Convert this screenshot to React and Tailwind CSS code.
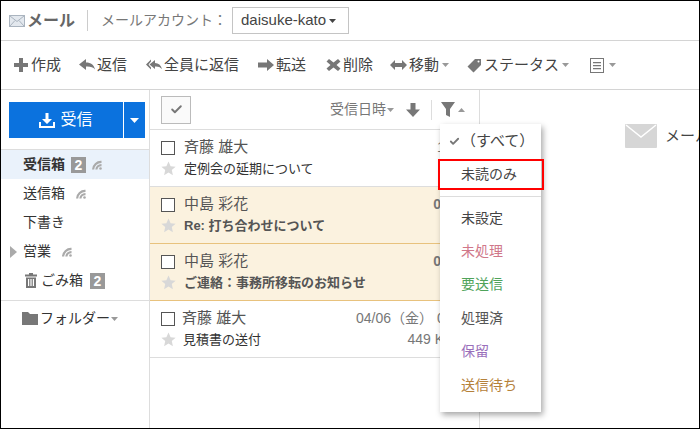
import { Check } from 'lucide-react'

const font = { fontFamily: '"Liberation Sans", "Noto Sans CJK JP", sans-serif' }

function Caret({ up = false, className = '' }) {
  return (
    <svg width="7" height="4" viewBox="0 0 7 4" className={className} aria-hidden="true">
      <path d={up ? 'M0 4L3.5 0L7 4Z' : 'M0 0H7L3.5 4Z'} fill="currentColor" />
    </svg>
  )
}

function Icon({ w = 16, h = 14, view, children, className = 'text-[#777]' }) {
  return (
    <svg width={w} height={h} viewBox={view || `0 0 ${w} ${h}`} className={`shrink-0 ${className}`} aria-hidden="true">
      <g fill="currentColor">{children}</g>
    </svg>
  )
}

const PlusIcon = () => <Icon w={14} h={14} className="mr-[1px] text-[#777]"><path d="M5 0h4v5h5v4H9v5H5V9H0V5h5z" /></Icon>
const ReplyIcon = () => <Icon><path d="M7 1v3.500c5 0 8 2.500 9 7-2-2.500-4.500-3.200-9-3V12L0 6.500z" /></Icon>
const ReplyAllIcon = () => (
  <Icon>
    <path d="M9 2v3c3.500 0 6 2 7 6-2-2-4-2.700-7-2.500V11L3.500 6.500z" />
    <path d="M5 1.500L0 6.500 5 11.500V9.500L2.500 6.500 5 3.500z" />
  </Icon>
)
const ForwardIcon = () => <Icon><path d="M9 1l7 6-7 6V9.500H0v-5h9z" /></Icon>
const CrossIcon = () => <Icon w={15} h={14}><path d="M3 1l4.500 3.500L12 1l2.500 2.500L10.500 7l4 3.500L12 13 7.500 9.500 3 13 .5 10.500l4-3.500-4-3.500z" /></Icon>
const MoveIcon = () => <Icon w={17} h={12}><path d="M5 1v3h7V1l5 5-5 5V8H5v3L0 6z" /></Icon>
const TagIcon = () => (
  <Icon w={15} h={15}>
    <path fillRule="evenodd" d="M8 1h6v6l-7.500 7.500L0.500 8.500zM11.500 2.500a1 1 0 1 0 0 2 1 1 0 0 0 0-2z" />
  </Icon>
)
const ListIcon = () => (
  <svg width="14" height="15" viewBox="0 0 14 15" className="shrink-0 text-[#777]" aria-hidden="true">
    <rect x="0.500" y="0.500" width="13" height="14" fill="none" stroke="currentColor" />
    <path d="M3 4h8v1.300H3zM3 7h8v1.300H3zM3 10h8v1.300H3z" fill="currentColor" />
  </svg>
)

const RssIcon = () => (
  <svg width="10" height="10" viewBox="0 0 10 10" className="shrink-0 text-[#aaa]" aria-hidden="true">
    <path d="M0 9.500A9 9 0 0 1 9.500 0.800V3A7 7 0 0 0 2.200 9.500z" fill="currentColor" />
    <path d="M3.300 9.500A6 6 0 0 1 9.500 4v2.200A3.800 3.800 0 0 0 5.500 9.500z" fill="currentColor" />
    <circle cx="8.500" cy="8.500" r="1.300" fill="currentColor" />
  </svg>
)

const StarIcon = () => (
  <svg width="15" height="15" viewBox="0 0 15 15" className="shrink-0 text-[#d8d8d8]" aria-hidden="true">
    <path d="M7.500 0.500l2.100 4.700 5 .5-3.800 3.400 1.100 5.100-4.400-2.700-4.400 2.700 1.100-5.100L.4 5.700l5-.5z" fill="currentColor" />
  </svg>
)

function CountBadge({ n }) {
  return (
    <span className="flex h-[16px] w-[15px] items-center justify-center bg-[#999] text-[14px] font-bold leading-none text-white">{n}</span>
  )
}

const tools = [
  { label: '作成', icon: <PlusIcon />, ml: 'ml-[13px]' },
  { label: '返信', icon: <ReplyIcon />, ml: 'ml-[18px]' },
  { label: '全員に返信', icon: <ReplyAllIcon />, ml: 'ml-[19px]' },
  { label: '転送', icon: <ForwardIcon />, ml: 'ml-[19px]' },
  { label: '削除', icon: <CrossIcon />, ml: 'ml-[20px]' },
  { label: '移動', icon: <MoveIcon />, ml: 'ml-[17px]', caret: true },
  { label: 'ステータス', icon: <TagIcon />, ml: 'ml-[18px]', caret: true },
]

const folders = [
  { label: '受信箱', count: 2, rss: true, active: true },
  { label: '送信箱', rss: true, gap: true },
  { label: '下書き' },
  { label: '営業', rss: true, arrow: true, gap: true },
]

const mails = [
  { from: '斉藤 雄大', subject: '定例会の延期について', date: '10:30', size: '1 MB' },
  { from: '中島 彩花', subject: 'Re: 打ち合わせについて', date: '09:12', size: '2 KB', unread: true },
  { from: '中島 彩花', subject: 'ご連絡：事務所移転のお知らせ', date: '08:47', size: '3 KB', unread: true },
  { from: '斉藤 雄大', subject: '見積書の送付', date: '04/06（金） 09:30', size: '449 KByte', tight: true },
]

const statuses = [
  { label: '未設定', color: 'text-[#444]' },
  { label: '未処理', color: 'text-[#d0778a]' },
  { label: '要送信', color: 'text-[#4fa35a]' },
  { label: '処理済', color: 'text-[#555]' },
  { label: '保留', color: 'text-[#9a6fbb]' },
  { label: '送信待ち', color: 'text-[#b5813a]' },
]

function MailRow({ mail }) {
  const rowColor = mail.unread ? 'bg-[#fbf2df] border-[#e8c27d]' : 'bg-white border-[#ddd]'
  return (
    <div className={`h-[57px] border-b pl-[11px] pr-[7px] pt-[7px] ${rowColor}`}>
      <div className="flex h-[21px] items-center whitespace-nowrap">
        <span className="h-[14px] w-[14px] shrink-0 border border-[#555] bg-white" />
        <span className={`text-[15px] text-[#555] ${mail.tight ? 'ml-[7px]' : 'ml-[9px]'}`}>{mail.from}</span>
        <span className={`ml-auto text-[14px] text-[#777] ${mail.unread ? 'mr-[3px] font-bold' : ''}`}>{mail.date}</span>
      </div>
      <div className="flex h-[21px] items-center whitespace-nowrap">
        <StarIcon />
        <span className={`text-[13px] ${mail.tight ? 'ml-[7px]' : 'ml-[8px]'} ${mail.unread ? 'font-bold text-[#555]' : 'text-[#333]'}`}>{mail.subject}</span>
        <span className="ml-auto text-[14px] text-[#777]">{mail.size}</span>
      </div>
    </div>
  )
}

export default function App() {
  return (
    <div className="relative flex h-[429px] w-[700px] flex-col overflow-hidden border border-black bg-white text-[#333]" style={font}>
      <header className="flex h-[40px] shrink-0 items-center border-b border-[#d4d4d4]">
        <svg width="16" height="12" viewBox="0 0 16 12" className="ml-[8px] shrink-0" aria-hidden="true">
          <rect x="0.500" y="0.500" width="15" height="11" fill="#e3e8ee" stroke="#aab4bf" />
          <path d="M1 1l7 5.500L15 1M1 11l5-5.500M15 11l-5-5.500" fill="none" stroke="#aab4bf" />
        </svg>
        <span className="ml-[2px] text-[16px] font-bold text-[#666]">メール</span>
        <span className="ml-[12px] h-[21px] w-px bg-[#ccc]" />
        <span className="ml-[13px] whitespace-nowrap text-[14px] text-[#777]">メールアカウント：</span>
        <div className="ml-[5px] flex h-[27px] w-[117px] items-center border border-[#c4c4c4] pl-[8px]">
          <span className="text-[15px] text-[#444]">daisuke-kato</span>
          <Caret className="ml-[3px] text-[#444]" />
        </div>
      </header>

      <div className="flex h-[49px] shrink-0 items-center border-b border-[#d4d4d4] text-[15px] text-[#444]">
        {tools.map((tool) => (
          <div key={tool.label} className={`flex items-center gap-[2px] whitespace-nowrap ${tool.ml}`}>
            {tool.icon}
            <span>{tool.label}</span>
            {tool.caret && <Caret className="ml-[1px] text-[#999]" />}
          </div>
        ))}
        <div className="ml-[21px] flex items-center gap-[5px]">
          <ListIcon />
          <Caret className="text-[#999]" />
        </div>
      </div>

      <div className="flex min-h-0 flex-1">
        <aside className="w-[149px] shrink-0 border-r border-[#ddd]">
          <div className="ml-[8px] mt-[12px] flex h-[36px] w-[136px] bg-[#0b72de] text-white">
            <div className="flex w-[115px] items-center justify-center gap-[5px] border-r border-white">
              <svg width="16" height="15" viewBox="0 0 16 15" aria-hidden="true">
                <path d="M6.500 0h3v6H13L8 11 3 6h3.500zM0 9h2v4h12V9h2v6H0z" fill="currentColor" />
              </svg>
              <span className="text-[16px]">受信</span>
            </div>
            <div className="flex flex-1 items-center justify-center">
              <svg width="9" height="5" viewBox="0 0 9 5" aria-hidden="true">
                <path d="M0 0h9L4.500 5z" fill="currentColor" />
              </svg>
            </div>
          </div>

          <nav className="mt-[11px] border-t border-[#ddd] text-[14px]">
            {folders.map((f) => (
              <div key={f.label} className={`relative flex h-[29px] items-center pl-[22px] ${f.active ? 'bg-[#eaf2fb] font-bold' : ''}`}>
                {f.arrow && (
                  <svg width="7" height="12" viewBox="0 0 7 12" className="absolute left-[9px] text-[#aaa]" aria-hidden="true">
                    <path d="M0 0l7 6-7 6z" fill="currentColor" />
                  </svg>
                )}
                <span>{f.label}</span>
                {f.count && <span className="ml-[6px]"><CountBadge n={f.count} /></span>}
                {f.rss && <span className={f.gap ? 'ml-[11px]' : 'ml-[6px]'}><RssIcon /></span>}
              </div>
            ))}
            <div className="flex h-[29px] items-center pl-[24px]">
              <svg width="12" height="15" viewBox="0 0 12 15" className="shrink-0 text-[#777]" aria-hidden="true">
                <path fillRule="evenodd" d="M4 0h4v1.500h4V3.500H0V1.500h4zM1 4.500h10V15H1zM3 6v7h1.200V6zM5.400 6v7h1.200V6zM7.800 6v7H9V6z" fill="currentColor" />
              </svg>
              <span className="ml-[4px]">ごみ箱</span>
              <span className="ml-[7px]"><CountBadge n={2} /></span>
            </div>
          </nav>

          <div className="mt-[5px] flex h-[36px] items-center border-t border-[#ddd] pl-[21px] text-[14px]">
            <svg width="16" height="13" viewBox="0 0 16 13" className="shrink-0 text-[#777]" aria-hidden="true">
              <path d="M0 0h6l2 2h8v11H0z" fill="currentColor" />
            </svg>
            <span className="ml-[2px]">フォルダー</span>
            <Caret className="ml-[1px] text-[#999]" />
          </div>
        </aside>

        <section className="w-[330px] shrink-0 border-r border-[#ddd]">
          <div className="flex h-[40px] items-center border-b border-[#ddd] pl-[11px]">
            <div className="flex h-[28px] w-[30px] items-center justify-center border border-[#bbb] bg-[#fafafa]">
              <Check size={13} strokeWidth={3.5} className="text-[#777]" />
            </div>
            <span className="ml-auto whitespace-nowrap text-[14px] text-[#777]">受信日時</span>
            <Caret className="ml-[1px] text-[#999]" />
            <svg width="14" height="14" viewBox="0 0 14 14" className="ml-[12px] shrink-0 text-[#777]" aria-hidden="true">
              <path d="M4.500 0h5v6.500H14L7 14 0 6.500h4.500z" fill="currentColor" />
            </svg>
            <span className="ml-[11px] h-[20px] w-px bg-[#ddd]" />
            <svg width="14" height="15" viewBox="0 0 14 15" className="ml-[9px] shrink-0 text-[#777]" aria-hidden="true">
              <path d="M0 0h14L9 7v8L5 13V7z" fill="currentColor" />
            </svg>
            <Caret up className="ml-[3px] mr-[14px] text-[#999]" />
          </div>
          {mails.map((mail) => (
            <MailRow key={mail.subject} mail={mail} />
          ))}
        </section>

        <main className="min-w-0 flex-1 overflow-hidden pl-[145px] pt-[34px]">
          <div className="flex items-center whitespace-nowrap">
            <svg width="32" height="24" viewBox="0 0 32 24" className="shrink-0" aria-hidden="true">
              <rect width="32" height="24" rx="1" fill="#d6d6d6" />
              <path d="M1 1l15 12L31 1" fill="none" stroke="#fff" strokeWidth="1.500" />
            </svg>
            <span className="ml-[8px] text-[15px] text-[#444]">メールを選択してください</span>
          </div>
        </main>
      </div>

      <div className="absolute left-[439px] top-[123px] h-[288px] w-[101px] bg-white pt-px text-[14px] shadow-[2px_3px_6px_rgba(0,0,0,0.35)]">
        <div className="flex h-[33px] items-center pl-[9px] text-[#444]">
          <Check size={11} strokeWidth={4} className="shrink-0 text-[#777]" />
          <span className="ml-[1px] whitespace-nowrap text-[15px]">（すべて）</span>
        </div>
        <div className="relative flex h-[33px] items-center pl-[21px] text-[#444]">
          未読のみ
          <span className="absolute -left-[2px] top-[1px] h-[31px] w-[106px] border-2 border-[#f00]" />
        </div>
        <div className="mb-[4.500px] mt-[5px] h-px bg-[#ddd]" />
        {statuses.map((s) => (
          <div key={s.label} className={`flex h-[33.400px] items-center pl-[21px] ${s.color}`}>{s.label}</div>
        ))}
      </div>
    </div>
  )
}
